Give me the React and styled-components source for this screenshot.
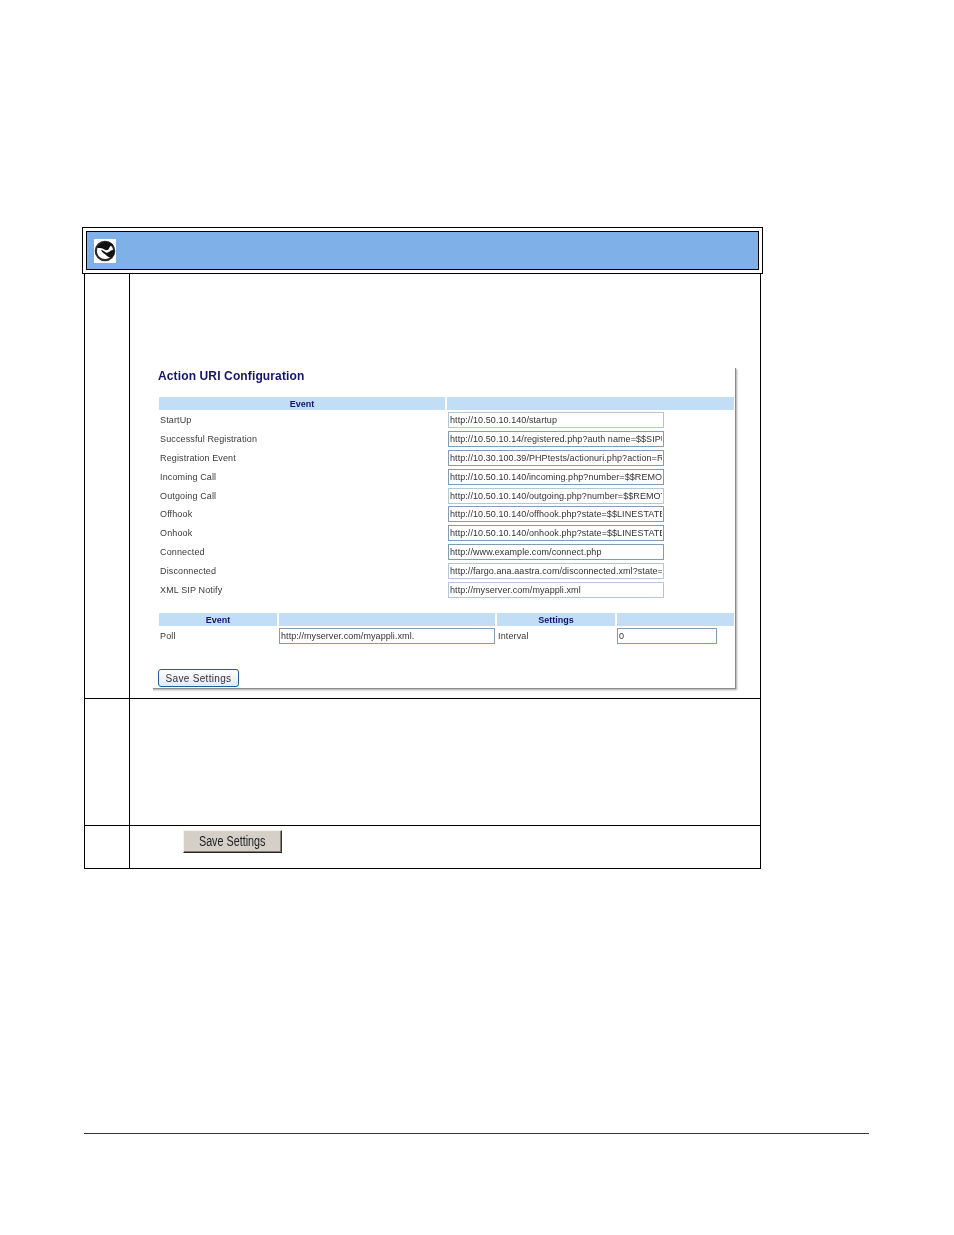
import React from "react";
import styled, { createGlobalStyle } from "styled-components";

const GlobalStyle = createGlobalStyle`
  html, body {
    margin: 0;
    padding: 0;
    background: #fff;
  }
  body {
    font-family: "Liberation Sans", Arial, sans-serif;
  }
`;

const Page = styled.div`
  width: 954px;
  height: 1235px;
  padding: 227px 85px 0 82px;
  box-sizing: border-box;
  display: flex;
  flex-direction: column;
`;

const HeaderFrame = styled.div`
  width: 681px;
  height: 47px;
  box-sizing: border-box;
  border: 1px solid #000;
  padding: 3px;
`;

const HeaderBar = styled.div`
  height: 39px;
  box-sizing: border-box;
  background: #7fb0e8;
  border: 1px solid #000;
  display: flex;
  align-items: center;
  padding-left: 7px;
`;

const IconBox = styled.div`
  width: 22px;
  height: 24px;
  background: #fff;
  display: flex;
  align-items: center;
  justify-content: center;
  filter: blur(0.35px);
`;

const StepTable = styled.div`
  width: 677px;
  box-sizing: border-box;
  margin-left: 2px;
  border-left: 1px solid #000;
  border-right: 1px solid #000;
`;

const StepRow = styled.div`
  display: grid;
  grid-template-columns: 45px 1fr;
  height: ${(p) => p.$height}px;
  box-sizing: border-box;
  border-bottom: 1px solid #000;
`;

const StepNumber = styled.div`
  border-right: 1px solid #000;
`;

const StepBody = styled.div`
  padding: ${(p) => p.$pad || "0"};
`;

const Panel = styled.div`
  width: 586px;
  height: 321px;
  margin: 94px 0 0 20px;
  box-sizing: border-box;
  padding: 1px 0 0 8px;
  border-right: 1px solid #8c8c8c;
  border-bottom: 1px solid #8c8c8c;
  box-shadow: 1px 1px 2px rgba(0, 0, 0, 0.35);
  filter: blur(0.3px);
  clip-path: inset(0 -4px -4px 3px);
`;

const Title = styled.div`
  height: 28px;
  font-size: 12px;
  line-height: 14px;
  font-weight: 700;
  color: #14146e;
  letter-spacing: 0.13px;
`;

const Grid = styled.div`
  display: grid;
  grid-template-columns: ${(p) => p.$cols};
  column-gap: 2px;
  width: 575px;
  margin-left: 1px;
  margin-top: ${(p) => p.$top}px;
`;

const Th = styled.div`
  height: 13px;
  background: #c2ddf6;
  color: #14146e;
  font-size: 9px;
  font-weight: 700;
  line-height: 14px;
  text-align: center;
`;

const Label = styled.div`
  height: 18.8px;
  display: flex;
  align-items: center;
  padding-left: 1px;
  font-size: 9px;
  letter-spacing: 0.13px;
  color: #3a3a3a;
  white-space: nowrap;
`;

const Field = styled.input`
  display: block;
  width: ${(p) => p.$width}px;
  height: 16px;
  box-sizing: border-box;
  margin: 1.4px 0 1.4px;
  padding: 0 1px;
  border: 1px solid ${(p) => (p.$soft ? "#b4c6d8" : "#7f9db9")};
  border-radius: 0;
  outline: none;
  background: #fff;
  font-family: "Liberation Sans", Arial, sans-serif;
  font-size: 9px;
  letter-spacing: 0.07px;
  color: #333;
`;

const EventRows = styled.div`
  display: grid;
  grid-template-columns: 287px 1fr;
  column-gap: 2px;
  width: 575px;
  margin: 1px 0 0 1px;
`;

const PollRow = styled.div`
  display: grid;
  grid-template-columns: 118px 216px 118px 1fr;
  column-gap: 2px;
  margin: 0.6px 0 0 1px;
  width: 575px;
`;

const SaveButton = styled.button`
  display: block;
  width: 81px;
  height: 18px;
  margin-top: 23.4px;
  padding: 0;
  box-sizing: border-box;
  border: 1px solid #1f5f9f;
  border-radius: 3px;
  background: linear-gradient(#fff, #e4e8f2);
  font-family: "Liberation Sans", Arial, sans-serif;
  font-size: 10px;
  letter-spacing: 0.32px;
  color: #333;
`;

const BevelButton = styled.button`
  display: block;
  width: 99px;
  height: 23px;
  padding: 0 0 1px;
  box-sizing: border-box;
  border: 1px solid;
  border-color: #f4f2ee #333 #222 #f4f2ee;
  box-shadow: inset -1px -1px 0 #807c76;
  background: #d4d0c8;
  font-family: "Liberation Sans", sans-serif;
  font-size: 14px;
  color: #222;
`;

const NarrowText = styled.span`
  display: inline-block;
  transform: scaleX(0.77);
  filter: blur(0.25px);
  white-space: nowrap;
`;

const Footer = styled.div`
  width: 785px;
  height: 1px;
  margin: 264px 0 0 2px;
  background: #333;
`;

const GlobeIcon = () => (
  <svg width="22" height="22" viewBox="0 0 22 22">
    <circle cx="11" cy="11" r="9.2" fill="#fff" stroke="#2a2a2a" strokeWidth="2.2" />
    <path d="M3 8C5 2.500 12 .500 17 3c1.500 1 2.500 2 3 3-1.500-.8-3-.5-4 .6-.8 1.500-1 3-2.500 3.400-2 .5-3.500-.5-5-1.500C7 8 5 8 3 8Z" fill="#111" />
    <path d="M7 10c2 .2 3.500 1.500 5 2.500 1.500.7 3-.7 4.500-1.800 1-.7 2.500-.9 3.500-.7.300 3-.5 5.500-2.500 7.500-2 0-3.500-.5-5-2C11 14 8 12.500 7 10Z" fill="#111" />
  </svg>
);

const events = [
  ["StartUp", "http://10.50.10.140/startup", true],
  ["Successful Registration", "http://10.50.10.14/registered.php?auth name=$$SIPUSERNAME$$"],
  ["Registration Event", "http://10.30.100.39/PHPtests/actionuri.php?action=REGISTERED"],
  ["Incoming Call", "http://10.50.10.140/incoming.php?number=$$REMOTENUMBER$$"],
  ["Outgoing Call", "http://10.50.10.140/outgoing.php?number=$$REMOTENUMBER$$", true],
  ["Offhook", "http://10.50.10.140/offhook.php?state=$$LINESTATE$$"],
  ["Onhook", "http://10.50.10.140/onhook.php?state=$$LINESTATE$$"],
  ["Connected", "http://www.example.com/connect.php"],
  ["Disconnected", "http://fargo.ana.aastra.com/disconnected.xml?state=$$LINESTATE$$", true],
  ["XML SIP Notify", "http://myserver.com/myappli.xml", true],
];

export default function App() {
  return (
    <Page>
      <GlobalStyle />
      <HeaderFrame>
        <HeaderBar>
          <IconBox>
            <GlobeIcon />
          </IconBox>
        </HeaderBar>
      </HeaderFrame>
      <StepTable>
        <StepRow $height={425}>
          <StepNumber />
          <StepBody>
            <Panel>
              <Title>Action URI Configuration</Title>
              <Grid $cols="286px 1fr" $top={0}>
                <Th>Event</Th>
                <Th />
              </Grid>
              <EventRows>
                {events.map(([label, url, soft]) => (
                  <React.Fragment key={label}>
                    <Label>{label}</Label>
                    <Field readOnly value={url} $width={216} $soft={soft} />
                  </React.Fragment>
                ))}
              </EventRows>
              <Grid $cols="118px 216px 118px 1fr" $top={14.5}>
                <Th>Event</Th>
                <Th />
                <Th>Settings</Th>
                <Th />
              </Grid>
              <PollRow>
                <Label>Poll</Label>
                <Field readOnly value="http://myserver.com/myappli.xml." $width={216} />
                <Label>Interval</Label>
                <Field readOnly value="0" $width={100} />
              </PollRow>
              <SaveButton>Save Settings</SaveButton>
            </Panel>
          </StepBody>
        </StepRow>
        <StepRow $height={127}>
          <StepNumber />
          <StepBody />
        </StepRow>
        <StepRow $height={43}>
          <StepNumber />
          <StepBody $pad="4px 0 0 53px">
            <BevelButton>
              <NarrowText>Save Settings</NarrowText>
            </BevelButton>
          </StepBody>
        </StepRow>
      </StepTable>
      <Footer />
    </Page>
  );
}
